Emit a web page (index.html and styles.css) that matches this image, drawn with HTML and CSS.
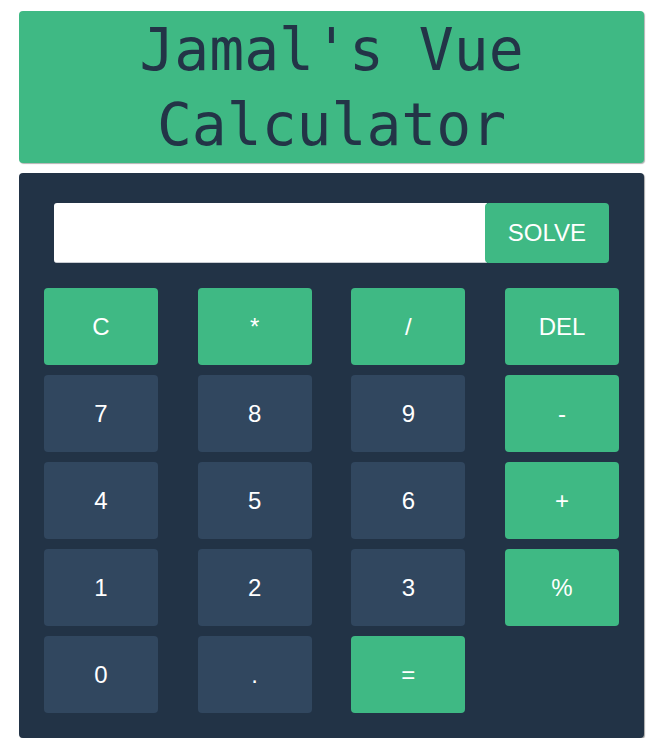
FILE: index.html
```html
<!DOCTYPE html>
<html>
<head>
<meta charset="utf-8">
<link rel="stylesheet" href="styles.css">
</head>
<body>
<div class="app">
  <header class="title-box">
    <h1 class="title">Jamal's Vue Calculator</h1>
  </header>
  <main class="calc">
    <div class="entry-row">
      <input class="display" type="text">
      <button class="btn solve">SOLVE</button>
    </div>
    <div class="keys">
      <button class="btn op">C</button>
      <button class="btn op">*</button>
      <button class="btn op">/</button>
      <button class="btn op">DEL</button>
      <button class="btn num">7</button>
      <button class="btn num">8</button>
      <button class="btn num">9</button>
      <button class="btn op">-</button>
      <button class="btn num">4</button>
      <button class="btn num">5</button>
      <button class="btn num">6</button>
      <button class="btn op">+</button>
      <button class="btn num">1</button>
      <button class="btn num">2</button>
      <button class="btn num">3</button>
      <button class="btn op">%</button>
      <button class="btn num">0</button>
      <button class="btn num">.</button>
      <button class="btn op">=</button>
    </div>
  </main>
</div>
</body>
</html>
```

FILE: styles.css
```css
html, body {
  margin: 0;
  padding: 0;
  background: #ffffff;
}
.app {
  width: 625px;
  margin: 11px 0 0 19px;
  display: flex;
  flex-direction: column;
  gap: 10px;
}
.title-box {
  background: #3fb984;
  border-radius: 4px;
  box-shadow: 1px 1px 1px rgba(0,0,0,0.3);
  height: 152px;
  display: flex;
  align-items: center;
  justify-content: center;
}
.title {
  margin: 2px 0 0 0;
  font-family: "DejaVu Sans Mono", monospace;
  font-weight: normal;
  font-size: 58px;
  line-height: 75px;
  color: #233447;
  text-align: center;
  width: 440px;
}
.calc {
  background: #223346;
  border-radius: 4px;
  box-shadow: 1px 1px 1px rgba(0,0,0,0.35);
  padding: 30px 25px 25px 25px;
  display: flex;
  flex-direction: column;
  gap: 25px;
}
.entry-row {
  display: flex;
  margin: 0 10px;
  height: 60px;
}
.display {
  flex: 1;
  margin: 0;
  border: none;
  border-bottom: 1px solid #c8ccd2;
  border-radius: 3px 0 0 3px;
  background: #ffffff;
  outline: none;
  padding: 0 10px;
  font-size: 24px;
  font-family: "Liberation Sans", Arial, sans-serif;
}
.btn {
  border: none;
  border-radius: 4px;
  color: #ffffff;
  font-family: "Liberation Sans", Arial, sans-serif;
  font-size: 24px;
  padding: 0;
  margin: 0;
}
.solve {
  width: 124px;
  margin-left: -2px;
  background: #3fb984;
}
.keys {
  display: grid;
  grid-template-columns: repeat(4, 1fr);
  grid-auto-rows: 77px;
  column-gap: 39.67px;
  row-gap: 10px;
}
.op {
  background: #3fb984;
}
.num {
  background: #31475f;
}
```
